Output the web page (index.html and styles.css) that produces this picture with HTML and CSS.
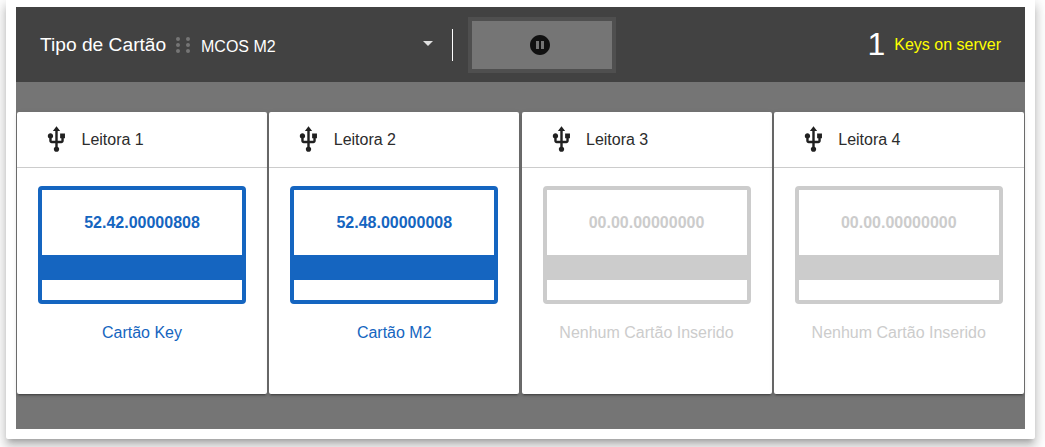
FILE: index.html
```html
<!DOCTYPE html>
<html lang="pt">
<head>
<meta charset="utf-8">
<title>Leitoras</title>
<link rel="stylesheet" href="styles.css">
</head>
<body>
<svg class="defs" width="0" height="0">
  <symbol id="usb" viewBox="0 0 24 24"><path d="M15 7v4h1v2h-3V5h2l-3-4-3 4h2v8H8v-2.070c.7-.37 1.200-1.080 1.200-1.930 0-1.210-.99-2.200-2.200-2.200-1.210 0-2.200.99-2.200 2.200 0 .85.5 1.560 1.200 1.930V13c0 1.110.89 2 2 2h3v3.050c-.71.370-1.200 1.100-1.200 1.950 0 1.220.99 2.200 2.200 2.200 1.210 0 2.200-.98 2.200-2.200 0-.85-.49-1.580-1.200-1.950V15h3c1.110 0 2-.89 2-2v-2h1V7h-4z"/></symbol>
</svg>
<main class="dialog">
  <div class="panel">
    <header class="toolbar">
      <span class="title">Tipo de Cartão</span>
      <svg class="grip" width="16" height="16" viewBox="0 0 16 16"><circle cx="3" cy="2" r="2"/><circle cx="13" cy="2" r="2"/><circle cx="3" cy="8" r="2"/><circle cx="13" cy="8" r="2"/><circle cx="3" cy="14" r="2"/><circle cx="13" cy="14" r="2"/></svg>
      <div class="select"><span>MCOS M2</span><i class="arrow"></i></div>
      <i class="divider"></i>
      <button class="pause"><svg width="24" height="24" viewBox="0 0 24 24"><path d="M12 2C6.480 2 2 6.480 2 12s4.480 10 10 10 10-4.480 10-10S17.520 2 12 2zm-1 14H8V8h3v8zm5 0h-3V8h3v8z"/></svg></button>
      <div class="keys"><span class="count">1</span><span class="label">Keys on server</span></div>
    </header>
    <section class="readers">
      <article class="reader active">
        <h2 class="name"><svg class="usb"><use href="#usb"/></svg>Leitora 1</h2>
        <div class="chip"><span class="serial">52.42.00000808</span><i class="stripe"></i></div>
        <p class="status">Cartão Key</p>
      </article>
      <article class="reader active">
        <h2 class="name"><svg class="usb"><use href="#usb"/></svg>Leitora 2</h2>
        <div class="chip"><span class="serial">52.48.00000008</span><i class="stripe"></i></div>
        <p class="status">Cartão M2</p>
      </article>
      <article class="reader">
        <h2 class="name"><svg class="usb"><use href="#usb"/></svg>Leitora 3</h2>
        <div class="chip"><span class="serial">00.00.00000000</span><i class="stripe"></i></div>
        <p class="status">Nenhum Cartão Inserido</p>
      </article>
      <article class="reader">
        <h2 class="name"><svg class="usb"><use href="#usb"/></svg>Leitora 4</h2>
        <div class="chip"><span class="serial">00.00.00000000</span><i class="stripe"></i></div>
        <p class="status">Nenhum Cartão Inserido</p>
      </article>
    </section>
  </div>
</main>
</body>
</html>
```
FILE: styles.css
```css
* { box-sizing: border-box; }
body {
  margin: 0;
  height: 447px;
  overflow: hidden;
  background: #fff;
  font: 16px/20px "Liberation Sans", Arial, sans-serif;
}
.defs { display: block; }
.dialog {
  width: 1029px;
  height: 439px;
  margin-left: 6px;
  padding: 7px 10px 10px;
  background: #fff;
  border-radius: 0 0 2px 2px;
  box-shadow: 0 5px 5px -3px rgba(0,0,0,.2), 0 8px 10px 1px rgba(0,0,0,.14), 0 3px 14px 2px rgba(0,0,0,.12);
}
.panel { height: 422px; background: #757575; }
.toolbar {
  display: flex;
  align-items: center;
  height: 75px;
  padding: 0 24px;
  background: #424242;
  color: #fff;
}
.title { width: 135px; font-size: 19.2px; }
.grip { fill: #757575; }
.select {
  display: flex;
  justify-content: space-between;
  align-items: center;
  width: 232px;
  margin-left: 10px;
  padding-top: 4px;
}
.arrow {
  margin: -6px 0 0;
  border: 5px solid transparent;
  border-top-color: #e0e0e0;
  border-bottom: 0;
}
.divider { width: 1px; height: 32px; margin: 0 15px 0 19px; background: #fff; }
.pause {
  display: flex;
  align-items: center;
  justify-content: center;
  width: 148px;
  height: 56px;
  padding: 0 4px 0 0;
  border: 4px solid #4f4f4f;
  background: #757575;
}
.pause path { fill: #111; }
.keys { display: flex; align-items: center; margin-left: auto; }
.count { font-size: 32px; line-height: 36px; margin-right: 9px; padding-bottom: 2px; }
.label { color: #ff0; }
.readers { display: grid; grid-template-columns: repeat(4, 1fr); padding-top: 30px; }
.reader {
  width: 250px;
  height: 282px;
  margin: 0 1px;
  background: #fff;
  color: #ccc;
  border-radius: 2px;
  box-shadow: 0 3px 1px -2px rgba(0,0,0,.2), 0 2px 2px rgba(0,0,0,.14), 0 1px 5px rgba(0,0,0,.12);
}
.active { color: #1565c0; }
.name {
  display: flex;
  align-items: center;
  height: 56px;
  margin: 0 0 18px;
  padding: 0 25px;
  border-bottom: 1px solid #ccc;
  color: #2c2c2c;
  font-size: 16px;
  font-weight: 400;
}
.usb { width: 29px; height: 29px; margin-right: 10.5px; fill: #212121; }
.chip {
  width: 208px;
  height: 118px;
  margin: 0 auto;
  border: 4px solid currentColor;
  border-radius: 4px;
  text-align: center;
}
.serial { display: block; height: 65px; padding-top: 23px; font-weight: 700; }
.stripe { display: block; height: 25px; background: currentColor; }
.status { margin: 19px 0 0; text-align: center; }
```
